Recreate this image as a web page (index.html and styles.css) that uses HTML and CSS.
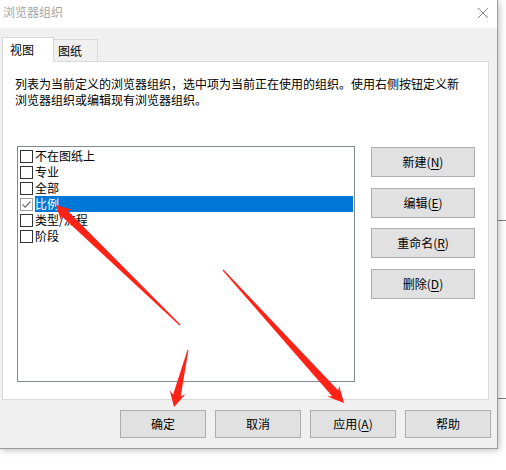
FILE: index.html
```html
<!DOCTYPE html>
<html lang="zh-CN">
<head>
<meta charset="utf-8">
<title>浏览器组织</title>
<link rel="stylesheet" href="styles.css">
</head>
<body>
<div class="desktop">
  <div class="bg-line bg-line-a"></div>
  <div class="bg-line bg-line-b"></div>
  <div class="window">
    <div class="titlebar">
      <span class="title">浏览器组织</span>
      <svg class="close" width="12" height="12" viewBox="0 0 12 12"><path d="M1 1 L11 11 M11 1 L1 11" stroke="#8c8c8c" stroke-width="1" fill="none"/></svg>
    </div>
    <div class="body">
      <div class="tabs">
        <div class="tab tab-active">视图</div>
        <div class="tab">图纸</div>
      </div>
      <div class="panel">
        <p class="desc">列表为当前定义的浏览器组织，选中项为当前正在使用的组织。使用右侧按钮定义新<br>浏览器组织或编辑现有浏览器组织。</p>
        <div class="main">
          <div class="list">
            <div class="row"><span class="box"></span><span class="label">不在图纸上</span></div>
            <div class="row"><span class="box"></span><span class="label">专业</span></div>
            <div class="row"><span class="box"></span><span class="label">全部</span></div>
            <div class="row"><span class="box box-checked"><svg width="11" height="11" viewBox="0 0 11 11"><path d="M1.5 5.5 L4.2 8.2 L9.5 2.5" stroke="#6d6d6d" stroke-width="1.2" fill="none"/></svg></span><span class="label label-selected">比例</span></div>
            <div class="row"><span class="box"></span><span class="label">类型/流程</span></div>
            <div class="row"><span class="box"></span><span class="label">阶段</span></div>
          </div>
          <div class="side-buttons">
            <div class="btn btn-side">新建(<u>N</u>)</div>
            <div class="btn btn-side">编辑(<u>E</u>)</div>
            <div class="btn btn-side">重命名(<u>R</u>)</div>
            <div class="btn btn-side">删除(<u>D</u>)</div>
          </div>
        </div>
      </div>
      <div class="footer">
        <div class="btn btn-foot">确定</div>
        <div class="btn btn-foot">取消</div>
        <div class="btn btn-foot">应用(<u>A</u>)</div>
        <div class="btn btn-foot">帮助</div>
      </div>
    </div>
  </div>
  <svg class="arrows" width="506" height="470" viewBox="0 0 506 470">
    <polygon fill="#ff2216" points="56,205 72.4,209.7 67.4,210.4 180.4,324.6 179.6,325.4 61.8,216.2 61.2,221.2"/>
    <polygon fill="#ff2216" points="174,407 185.4,394.3 180.7,396.2 188.5,350 187.5,350 173.1,394.4 169.8,390.5"/>
    <polygon fill="#ff2216" points="344,403 339.1,385.8 338.3,390.5 223.4,269.6 222.6,270.4 332.2,396.2 327.3,396.6"/>
  </svg>
</div>
</body>
</html>
```

FILE: styles.css
```css
html, body {
  margin: 0;
  padding: 0;
  background: #ffffff;
}

body {
  font-family: "Noto Sans CJK SC", "Noto Sans", sans-serif;
  font-size: 12px;
  color: #000000;
}

.desktop {
  position: relative;
  width: 506px;
  height: 470px;
  overflow: hidden;
  background: #ffffff;
}

.bg-line {
  position: absolute;
  left: 498px;
  width: 8px;
  height: 1px;
  background: #7d7d7d;
}

.bg-line-a { top: 220px; }
.bg-line-b { top: 398px; }

.window {
  position: relative;
  width: 498px;
  height: 449px;
  box-sizing: border-box;
  border-right: 1px solid #9c9c9c;
  border-bottom: 1px solid #9c9c9c;
  box-shadow: 1px 1px 7px rgba(0, 0, 0, 0.28);
  background: #f0f0f0;
  display: flex;
  flex-direction: column;
}

.titlebar {
  height: 28px;
  background: #ffffff;
  display: flex;
  align-items: center;
  justify-content: space-between;
  padding: 0 8px 4px 3px;
  box-sizing: border-box;
}

.title {
  color: #a6a6a6;
  font-size: 12px;
  line-height: 16px;
}

.close {
  display: block;
  margin-top: 2px;
}

.body {
  flex: 1;
  padding: 9px 0 0 2px;
  display: flex;
  flex-direction: column;
}

.tabs {
  display: flex;
  align-items: flex-end;
  height: 24px;
}

.tab {
  box-sizing: border-box;
  height: 22px;
  width: 44px;
  padding-left: 4px;
  line-height: 21px;
  border-top: 1px solid #d9d9d9;
  border-right: 1px solid #d9d9d9;
  background: #f0f0f0;
}

.tab-active {
  position: relative;
  z-index: 1;
  width: 52px;
  height: 25px;
  margin-bottom: -1px;
  padding-left: 7px;
  line-height: 24px;
  border-left: 1px solid #d9d9d9;
  background: #ffffff;
}

.panel {
  box-sizing: border-box;
  width: 487px;
  height: 339px;
  border: 1px solid #d9d9d9;
  background: #ffffff;
}

.desc {
  margin: 0;
  padding: 14px 0 0 12px;
  line-height: 16px;
  white-space: nowrap;
}

.main {
  display: flex;
  margin-top: 38px;
  padding-left: 14px;
}

.list {
  box-sizing: border-box;
  width: 338px;
  height: 236px;
  border: 1px solid #828790;
  padding: 1px 1px 1px 2px;
  background: #ffffff;
}

.row {
  display: flex;
  align-items: flex-start;
  height: 16px;
}

.box {
  box-sizing: border-box;
  width: 13px;
  height: 13px;
  margin-top: 2px;
  border: 1px solid #333333;
  background: #ffffff;
  display: flex;
  align-items: center;
  justify-content: center;
}

.box-checked {
  border-color: #a0a0a0;
}

.box svg {
  display: block;
}

.label {
  margin-left: 2px;
  line-height: 16px;
  height: 16px;
}

.label-selected {
  flex: 1;
  background: #0078d7;
  color: #ffffff;
}

.side-buttons {
  display: flex;
  flex-direction: column;
  gap: 10.5px;
  margin-left: 16px;
  padding-top: 1px;
}

.btn {
  box-sizing: border-box;
  background: #e1e1e1;
  border: 1px solid #adadad;
  display: flex;
  align-items: center;
  justify-content: center;
  line-height: 16px;
}

.btn u {
  text-decoration-thickness: 1px;
  text-underline-offset: 2px;
}

.btn-side {
  width: 104px;
  height: 30px;
}

.footer {
  display: flex;
  justify-content: flex-end;
  gap: 9px;
  margin-top: 10px;
  padding-right: 6px;
}

.btn-foot {
  width: 86px;
  height: 28px;
}

.arrows {
  position: absolute;
  left: 0;
  top: 0;
  pointer-events: none;
}
```
